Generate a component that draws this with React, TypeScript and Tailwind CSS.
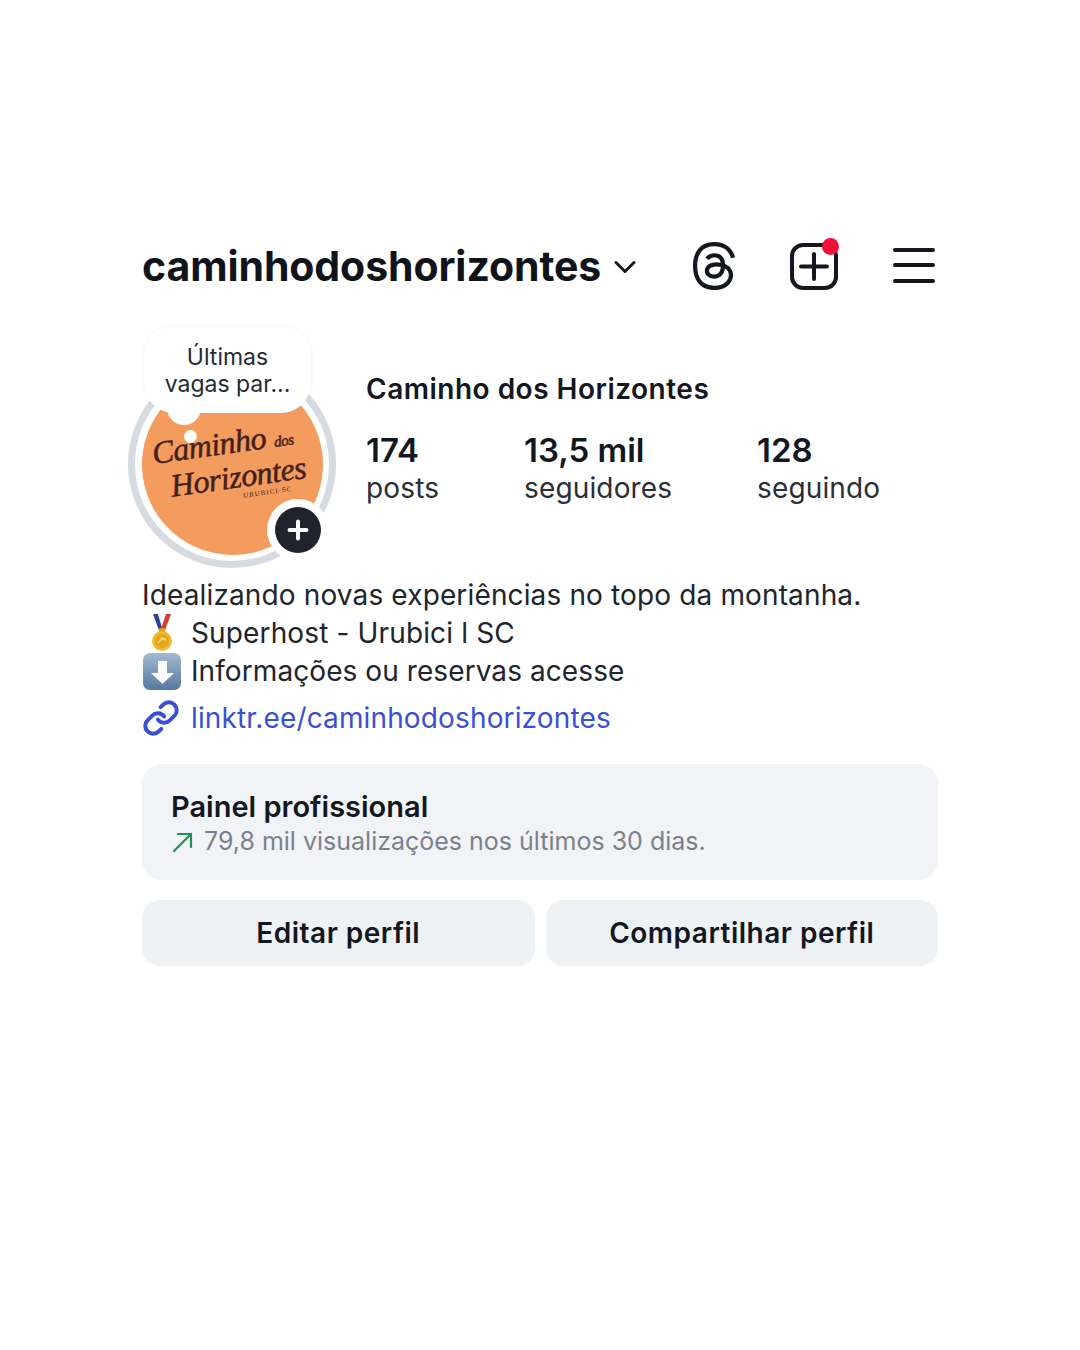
import { Link } from "lucide-react";
import { SiThreads } from "react-icons/si";

const inter = { fontFamily: "Inter, sans-serif" };

function Medal() {
  return (
    <svg width="26" height="38" viewBox="0 0 26 38">
      <path d="M4 0 L9 0 L14 15 L11 19 Z" fill="#2f3f8f" />
      <path d="M9 0 L12 0 L14 12 L13 14 Z" fill="#f1f1f4" />
      <path d="M22 0 L17 0 L12 15 L15 19 Z" fill="#d23a34" />
      <rect x="10" y="14" width="6" height="6" rx="1" fill="#d9a021" />
      <circle cx="13" cy="27" r="10" fill="#f2bb2c" />
      <circle cx="13" cy="27" r="7" fill="#e5a51f" />
      <path d="M9 29 L13 24 L17 26" stroke="#f8d668" strokeWidth="2" fill="none" />
    </svg>
  );
}

function DownSquare() {
  return (
    <svg width="38" height="37" viewBox="0 0 38 37">
      <defs>
        <linearGradient id="sq" x1="0" y1="0" x2="0" y2="1">
          <stop offset="0" stopColor="#a3bad0" />
          <stop offset="1" stopColor="#54799f" />
        </linearGradient>
      </defs>
      <rect width="38" height="37" rx="7" fill="url(#sq)" />
      <path d="M15 8 H24 V20 H31 L19.5 31 L8 20 H15 Z" fill="#fff" />
    </svg>
  );
}

function Avatar() {
  return (
    <div className="relative w-[208px] h-[208px] shrink-0 -ml-[14px]">
      <div className="w-full h-full rounded-full border-[7px] border-[#d6dae1] flex items-center justify-center">
        <div className="w-[181px] h-[181px] rounded-full bg-[#f49b5e] flex flex-col items-center justify-center text-[#43201a] -rotate-[8deg] overflow-hidden [-webkit-text-stroke:0.5px_#43201a]" style={{ fontFamily: "'Liberation Serif', serif" }}>
          <div className="italic text-[32px] leading-[29px] tracking-[-0.4px] whitespace-nowrap -ml-[14px]">Caminho <span className="text-[15px]">dos</span></div>
          <div className="italic text-[32px] leading-[29px] tracking-[-0.4px] whitespace-nowrap ml-[8px]">Horizontes</div>
          <div className="text-[7px] leading-[10px] tracking-[1px] ml-[62px] [-webkit-text-stroke:0px]">URUBICI-SC</div>
        </div>
      </div>

      {/* note bubble */}
      <div className="absolute left-[16px] -top-[34px] w-[167px] h-[87px] bg-white rounded-[30px] shadow-[0_0_4px_rgba(0,0,0,0.06)] flex flex-col items-center justify-center pt-[2px] text-[23px] leading-[27px] text-[#262b33]" style={inter}>
        <div>Últimas</div>
        <div>vagas par...</div>
      </div>
      <div className="absolute left-[39px] top-[48px] w-[34px] h-[17px] bg-white rounded-b-full" />
      <div className="absolute left-[56px] top-[70px] w-[13px] h-[13px] bg-white rounded-full" />

      {/* add story */}
      <div className="absolute left-[139px] top-[139px] w-[62px] h-[62px] rounded-full bg-white flex items-center justify-center">
        <div className="w-[46px] h-[46px] rounded-full bg-[#20232b] flex items-center justify-center">
          <svg width="22" height="22" viewBox="0 0 22 22" stroke="#fff" strokeWidth="4" strokeLinecap="round">
            <path d="M11 2.5 V19.5 M2.5 11 H19.5" />
          </svg>
        </div>
      </div>
    </div>
  );
}

function Stat({ value, label, className }: { value: string; label: string; className: string }) {
  return (
    <div className={className}>
      <div className="text-[33px] leading-[36px] font-semibold text-[#13171f] -mt-[1px]">{value}</div>
      <div className="text-[28px] leading-[38px] tracking-[0.15px] text-[#2a2e36] mt-[1px]">{label}</div>
    </div>
  );
}

export default function App() {
  return (
    <main className="w-[1080px] h-[1350px] bg-white pt-[236px] px-[142px] text-[#1a1d24] overflow-hidden" style={inter}>
      {/* Header */}
      <div className="flex items-center h-[60px]">
        <h1 className="text-[41px] leading-[60px] font-bold tracking-[-0.1px] text-[#10131a]">caminhodoshorizontes</h1>
        <svg className="ml-[13px] mt-[1px]" width="22" height="14" viewBox="0 0 22 14" fill="none" stroke="#14171e" strokeWidth="3" strokeLinecap="round" strokeLinejoin="round">
          <path d="M2 2.5 L11 11.5 L20 2.5" />
        </svg>
        <SiThreads className="ml-[54px] text-[#14171e]" size={48} />
        <div className="relative ml-[52px] w-[48px] h-[48px]">
          <svg width="48" height="48" viewBox="0 0 48 48" fill="none" stroke="#14171e" strokeWidth="4" strokeLinecap="round">
            <rect x="2" y="3" width="44" height="43" rx="11" />
            <path d="M24 12 V37 M11 24.5 H37" />
          </svg>
          <div className="absolute -top-[4px] right-[-1px] w-[17px] h-[17px] rounded-full bg-[#f0103a]" />
        </div>
        <div className="ml-[55px] w-[42px] h-[35px] flex flex-col justify-between -mt-[2px]">
          <div className="h-[4px] rounded-full bg-[#14171e]" />
          <div className="h-[4px] rounded-full bg-[#14171e]" />
          <div className="h-[4px] rounded-full bg-[#14171e]" />
        </div>
      </div>

      {/* Avatar + stats */}
      <div className="flex mt-[64px]">
        <Avatar />
        <div className="ml-[30px] pt-[11px]">
          <div className="text-[28px] leading-[36px] font-semibold tracking-[0.5px] text-[#13171f] whitespace-nowrap">Caminho dos Horizontes</div>
          <div className="flex mt-[26px]">
            <Stat value="174" label="posts" className="w-[158px]" />
            <Stat value="13,5 mil" label="seguidores" className="w-[233px]" />
            <Stat value="128" label="seguindo" className="w-[130px]" />
          </div>
        </div>
      </div>

      {/* Bio */}
      <div className="mt-[8px] text-[28px] leading-[38px] tracking-[0.14px] text-[#20242c]">
        <div>Idealizando novas experiências no topo da montanha.</div>
        <div className="flex items-center">
          <div className="w-[38px] flex justify-center pl-[2px]"><Medal /></div>
          <span className="ml-[11px]">Superhost - Urubici l SC</span>
        </div>
        <div className="flex items-center">
          <div className="pl-[1px]"><DownSquare /></div>
          <span className="ml-[10px] tracking-[0.08px]">Informações ou reservas acesse</span>
        </div>
        <div className="flex items-center mt-[9px] text-[#3950d6]">
          <Link size={38} strokeWidth={2.5} color="#3950d6" />
          <span className="ml-[11px]">linktr.ee/caminhodoshorizontes</span>
        </div>
      </div>

      {/* Professional dashboard */}
      <div className="mt-[27px] h-[116px] rounded-[20px] bg-[#f1f3f6] pl-[29px] pt-[26px]">
        <div className="text-[29px] leading-[34px] font-semibold text-[#13171f]">Painel profissional</div>
        <div className="flex items-center h-[36px] text-[25px] text-[#7b818b]">
          <svg className="ml-[1px]" width="22" height="22" viewBox="0 0 22 22" fill="none" stroke="#1f9150" strokeWidth="2.2" strokeLinecap="round" strokeLinejoin="round">
            <path d="M2 20 L19 3 M6 3 H19 V16" />
          </svg>
          <span className="ml-[10px]">79,8 mil visualizações nos últimos 30 dias.</span>
        </div>
      </div>

      {/* Buttons */}
      <div className="flex gap-[11px] mt-[20px]">
        <button className="flex-1 h-[66px] rounded-[18px] bg-[#eff2f5] text-[28px] font-semibold tracking-[0.5px] text-[#13171f]">Editar perfil</button>
        <button className="flex-1 h-[66px] rounded-[18px] bg-[#eff2f5] text-[28px] font-semibold tracking-[0.5px] text-[#13171f]">Compartilhar perfil</button>
      </div>
    </main>
  );
}
